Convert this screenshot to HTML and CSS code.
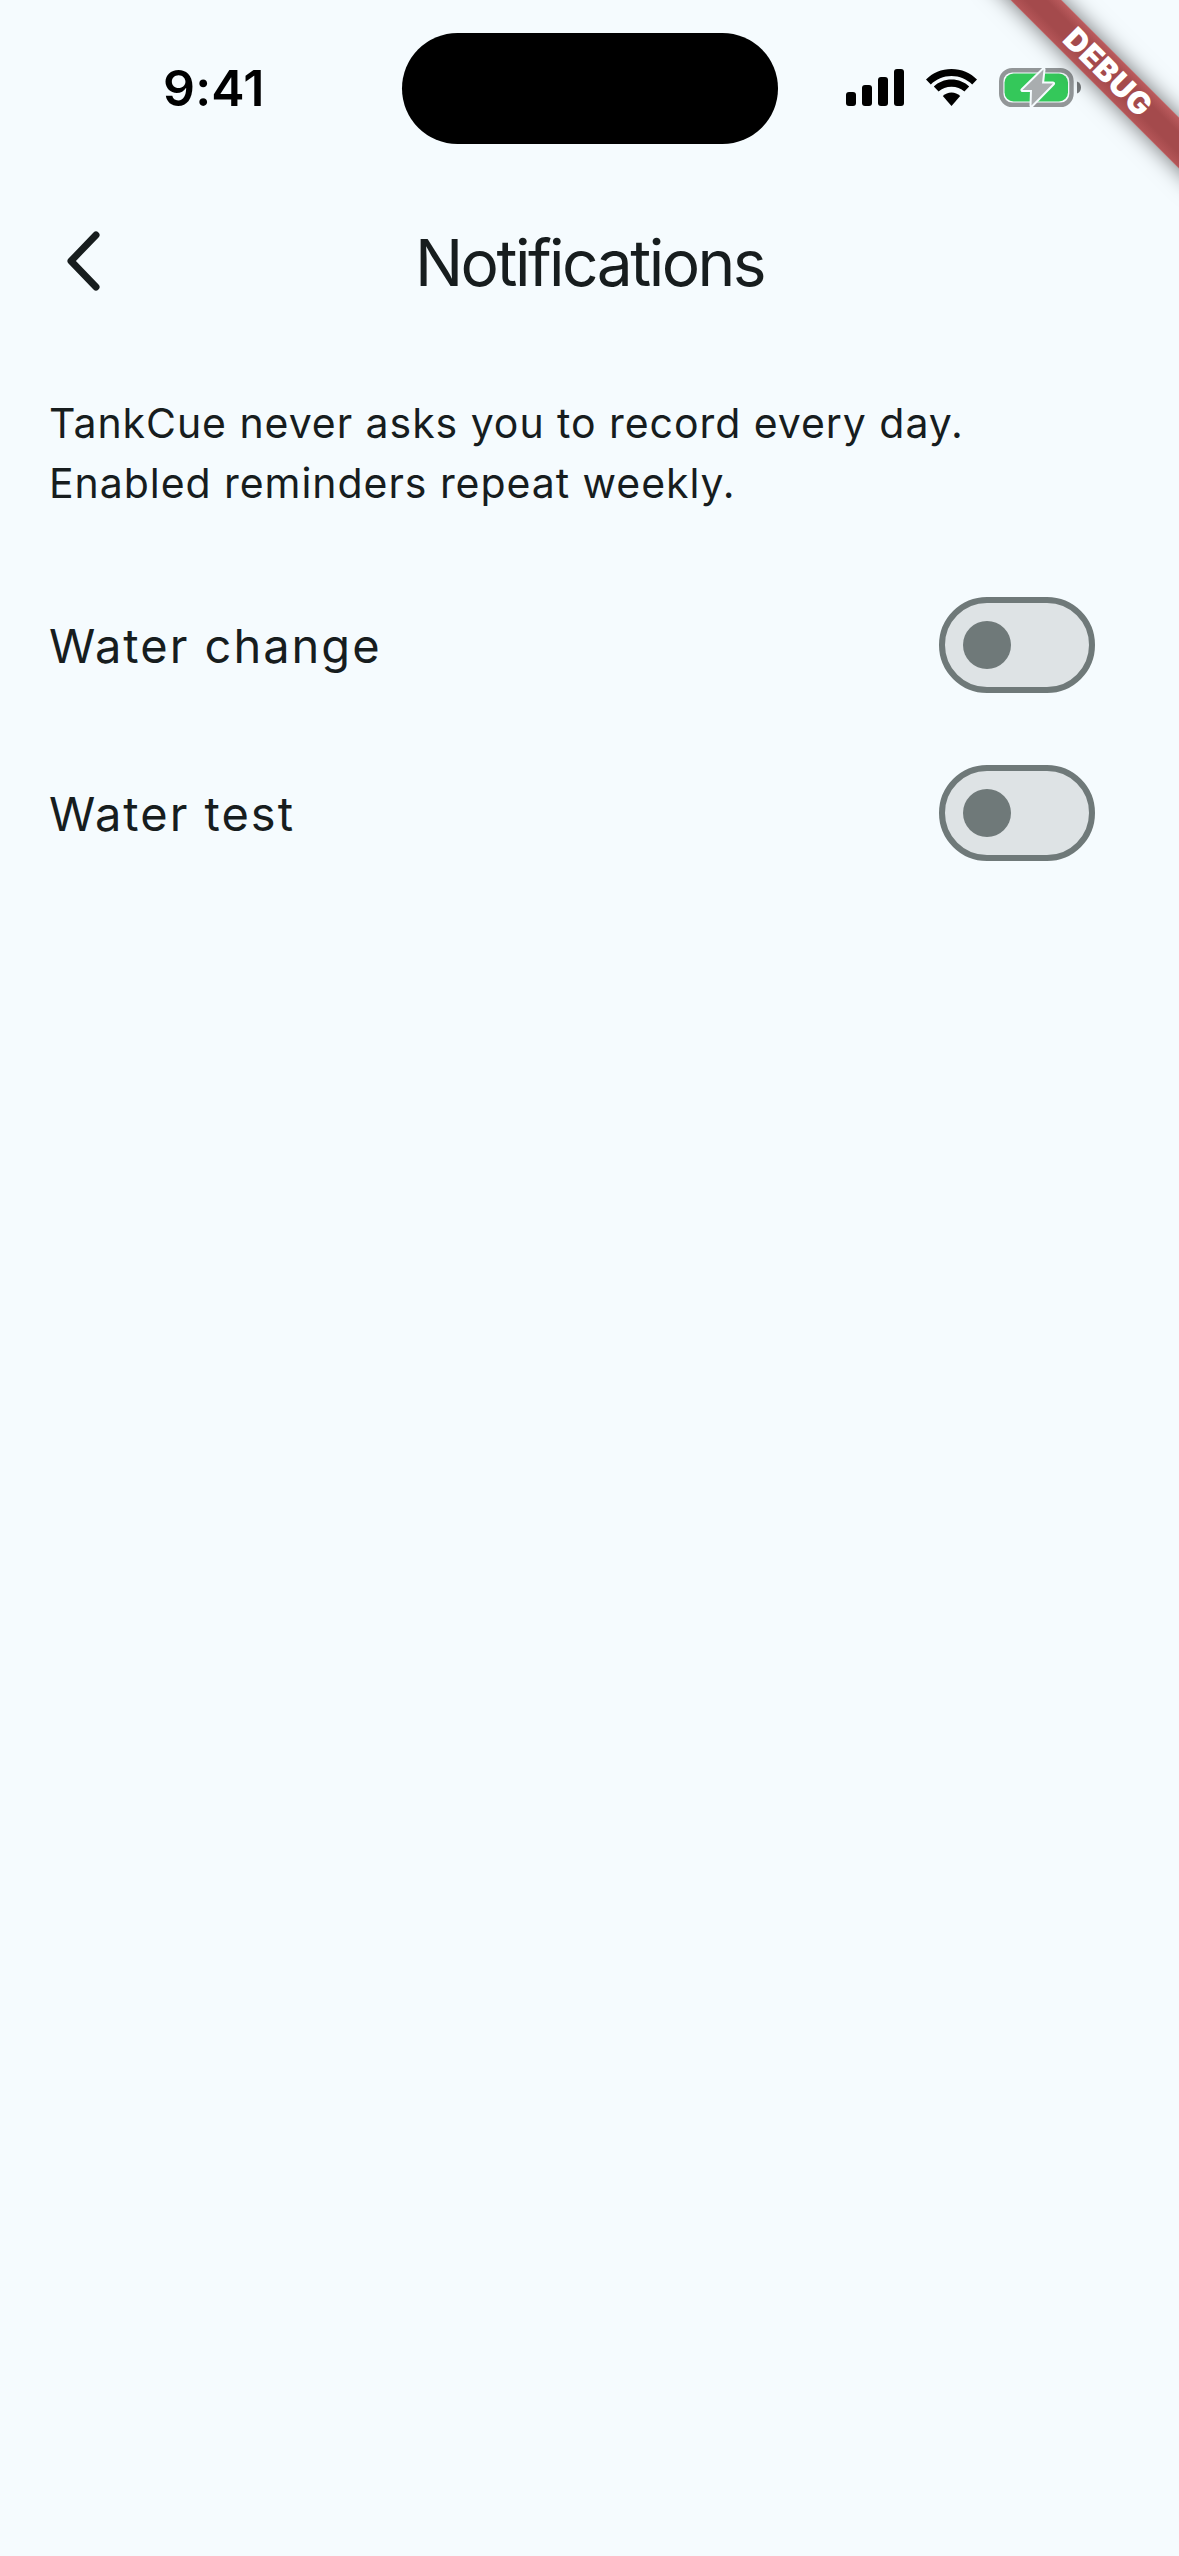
FILE: index.html
```html
<!DOCTYPE html>
<html lang="en">
<head>
    <meta charset="UTF-8">
    <meta name="viewport" content="width=device-width, initial-scale=1.0">
    <title>Notifications</title>
    <link rel="stylesheet" href="styles.css">
</head>
<body>
    <div class="page">

        <!-- Status bar -->
        <div class="status-bar">
            <span class="time">9:41</span>
            <div class="island"></div>
            <div class="status-icons">
                <svg width="58" height="37" viewBox="0 0 58 37">
                    <rect x="0" y="23" width="10" height="14" rx="3"/>
                    <rect x="16" y="16" width="10" height="21" rx="3"/>
                    <rect x="32" y="8" width="10" height="29" rx="3"/>
                    <rect x="48" y="0" width="10" height="37" rx="3"/>
                </svg>
                <svg width="51" height="37" viewBox="0 0 51 37">
                    <path d="M25.5 0C35.500 0 44.500 4 51 10.500L46.200 15.500C40.700 10.200 33.500 7 25.500 7S10.300 10.200 4.800 15.500L0 10.500C6.500 4 15.500 0 25.500 0Z"/>
                    <path d="M25.500 10.500C32.500 10.500 38.700 13.200 43.200 17.500L38.400 22.500C35 19.400 30.500 17.800 25.500 17.800S16 19.400 12.600 22.500L7.800 17.500C12.300 13.200 18.500 10.500 25.500 10.500Z"/>
                    <path d="M25.500 23.500C28.800 23.500 31.800 24.800 34.200 27L25.500 37L16.800 27C19.200 24.800 22.200 23.500 25.500 23.500Z"/>
                </svg>
                <svg width="82" height="39" viewBox="0 0 82 39">
                    <rect x="2.200" y="2.200" width="70.300" height="34.600" rx="11" fill="none" stroke="#929698" stroke-width="4.400"/>
                    <rect x="5.500" y="5.500" width="63.500" height="28" rx="9" fill="#34c85a"/>
                    <path d="M78 13.500C81 14.500 82 17 82 19.500S81 24.500 78 25.500Z" fill="#767a7c"/>
                    <path d="M44.500 1.500L23.500 22H33L32.500 37.500L54 15.500H43Z" fill="#a9adaf" stroke="#f5fbfe" stroke-width="4" paint-order="stroke" stroke-linejoin="round"/>
                </svg>
            </div>
        </div>

        <!-- App bar -->
        <header class="app-bar">
            <a href="#" class="back-btn">
                <svg width="36" height="60" viewBox="0 0 36 60">
                    <path d="M31 4L6 30L31 56" fill="none" stroke="#171d1e" stroke-width="7" stroke-linecap="round" stroke-linejoin="round"/>
                </svg>
            </a>
            <h1 class="title">Notifications</h1>
        </header>

        <!-- Content -->
        <main class="content">
            <p class="intro">TankCue never asks you to record every day.<br>Enabled reminders repeat weekly.</p>

            <div class="settings">
                <div class="setting-row">
                    <span class="setting-label">Water change</span>
                    <div class="switch"><div class="switch-thumb"></div></div>
                </div>
                <div class="setting-row">
                    <span class="setting-label">Water test</span>
                    <div class="switch"><div class="switch-thumb"></div></div>
                </div>
            </div>
        </main>

        <div class="debug-banner">DEBUG</div>
    </div>
</body>
</html>
```

FILE: styles.css
```css
/* General Styles */
body {
    margin: 0;
    padding: 0;
    background-color: #f5fbfe;
    font-family: Inter, "Liberation Sans", sans-serif;
    color: #171d1e;
}

.page {
    position: relative;
    width: 1179px;
    height: 2556px;
    overflow: hidden;
}

/* Status bar */
.status-bar {
    box-sizing: border-box;
    height: 177px;
    padding: 33px 98px 0 163px;
    display: flex;
    align-items: flex-start;
}

.time {
    width: 239px;
    margin-top: 25px;
    font-size: 50px;
    line-height: 60px;
    font-weight: 600;
    letter-spacing: 0.2px;
    color: #000;
}

.island {
    width: 376px;
    height: 111px;
    border-radius: 56px;
    background-color: #000;
}

.status-icons {
    display: flex;
    align-items: center;
    gap: 22px;
    margin-left: 68px;
    margin-top: 35px;
}

/* App bar */
.app-bar {
    height: 168px;
    display: flex;
    align-items: center;
    justify-content: center;
    position: relative;
}

.back-btn {
    position: absolute;
    left: 65px;
    top: 54px;
    display: block;
    line-height: 0;
}

.title {
    margin: 0;
    padding-top: 3px;
    font-size: 64px;
    line-height: 88px;
    font-weight: 400;
    letter-spacing: -2.5px;
}

/* Content */
.content {
    padding: 48px 84px 0 49px;
}

.intro {
    margin: 0;
    font-size: 41px;
    line-height: 60px;
    letter-spacing: 0.95px;
}

.settings {
    display: flex;
    flex-direction: column;
    gap: 72px;
    margin-top: 84px;
}

.setting-row {
    display: flex;
    align-items: center;
    justify-content: space-between;
}

.setting-label {
    font-size: 47px;
    letter-spacing: 2px;
}

.switch {
    box-sizing: border-box;
    width: 156px;
    height: 96px;
    padding: 18px;
    border: 6px solid #6f7979;
    border-radius: 48px;
    background-color: #dee3e5;
}

.switch-thumb {
    width: 48px;
    height: 48px;
    border-radius: 50%;
    background-color: #6f7979;
}

/* Debug ribbon */
.debug-banner {
    position: absolute;
    left: 956px;
    top: 52px;
    width: 300px;
    height: 36px;
    transform: rotate(45deg);
    background: linear-gradient(#bb5c5e, #a44a4c 30%, #a44a4c 70%, #b55658);
    box-shadow: 0 0 22px rgba(0, 0, 0, 0.55);
    color: #fff;
    font-size: 31px;
    line-height: 36px;
    font-weight: 900;
    letter-spacing: 0.5px;
    text-indent: 6px;
    text-align: center;
}
```
